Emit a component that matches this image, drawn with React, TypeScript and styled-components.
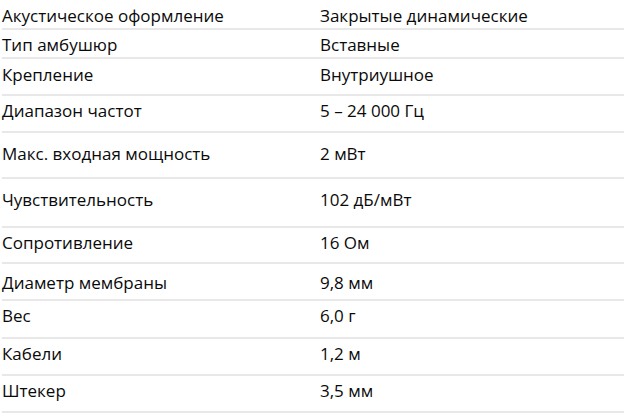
import React from "react";
import styled, { createGlobalStyle } from "styled-components";

const Global = createGlobalStyle`
  html, body { margin: 0; padding: 0; background: #ffffff; }
  body { font-family: "Open Sans", "Noto Sans", sans-serif; }
`;

const Table = styled.div`
  width: 626px;
  display: flex;
  flex-direction: column;
  padding-left: 2px;
  box-sizing: border-box;
`;

const Row = styled.div<{ $h: number; $pt: number }>`
  display: grid;
  grid-template-columns: 318px 1fr;
  height: ${(p) => p.$h}px;
  padding-top: ${(p) => p.$pt}px;
  box-sizing: content-box;
  border-bottom: 2px solid #e8e8e8;
  margin-right: 2px;
`;

const Cell = styled.div`
  font-size: 17px;
  line-height: 20px;
  color: #0a0a0a;
  white-space: nowrap;
  letter-spacing: 0;
`;

const rows: [string, string, number, number][] = [
  ["Акустическое оформление", "Закрытые динамические", 28, 23],
  ["Тип амбушюр", "Вставные", 27, 22],
  ["Крепление", "Внутриушное", 35, 23],
  ["Диапазон частот", "5 – 24 000 Гц", 35, 22],
  ["Макс. входная мощность", "2 мВт", 44, 28],
  ["Чувствительность", "102 дБ/мВт", 47, 28],
  ["Сопротивление", "16 Ом", 34, 22],
  ["Диаметр мембраны", "9,8 мм", 35, 26],
  ["Вес", "6,0 г", 36, 22],
  ["Кабели", "1,2 м", 35, 22],
  ["Штекер", "3,5 мм", 35, 22],
];

export default function App() {
  return (
    <>
      <Global />
      <Table>
        {rows.map(([k, v, h, b]) => {
          const pt = Math.max(0, b - 17);
          return (
            <Row key={k} $h={h - pt} $pt={pt}>
              <Cell>{k}</Cell>
              <Cell>{v}</Cell>
            </Row>
          );
        })}
      </Table>
    </>
  );
}
